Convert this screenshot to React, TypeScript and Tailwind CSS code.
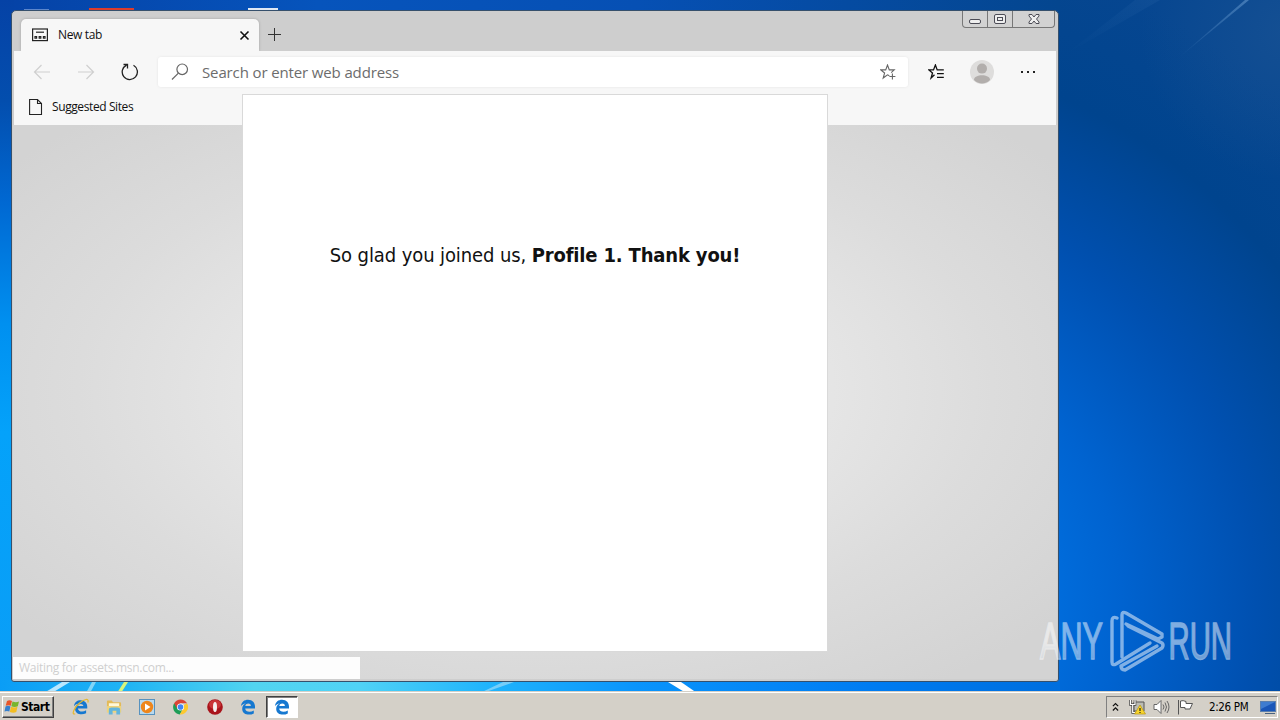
import type { ReactNode } from 'react';
import clsx from 'clsx';

const UI_FONT = "font-['Open_Sans','Noto_Sans',sans-serif]";
const TAHOMA = "font-['DejaVu_Sans_Condensed','DejaVu_Sans',sans-serif]";

export default function App() {
  return (
    <div className="relative flex h-[720px] w-[1280px] flex-col overflow-hidden bg-[#0060c8]">
      <Wallpaper />
      <BrowserWindow />
      <Watermark />
      <Taskbar />
    </div>
  );
}

function Wallpaper() {
  return (
    <svg className="absolute inset-0" width="1280" height="720" viewBox="0 0 1280 720">
      <defs>
        <radialGradient id="sky" gradientUnits="userSpaceOnUse" cx="840" cy="600" r="670">
          <stop offset="0.3" stopColor="#006ede" />
          <stop offset="0.42" stopColor="#0063d0" />
          <stop offset="0.62" stopColor="#0050b0" />
          <stop offset="0.82" stopColor="#00448e" />
          <stop offset="1" stopColor="#064690" />
        </radialGradient>
        <linearGradient id="left" x1="0" y1="0" x2="0" y2="1">
          <stop offset="0" stopColor="#0542a6" />
          <stop offset="0.14" stopColor="#034eae" />
          <stop offset="0.28" stopColor="#0068d2" />
          <stop offset="0.45" stopColor="#0090f0" />
          <stop offset="0.6" stopColor="#04a2fa" />
          <stop offset="1" stopColor="#0b9df6" />
        </linearGradient>
        <linearGradient id="floor" x1="0" y1="0" x2="1" y2="0">
          <stop offset="0" stopColor="#0a9df6" />
          <stop offset="0.12" stopColor="#20b4f4" />
          <stop offset="0.24" stopColor="#52d4f0" />
          <stop offset="0.34" stopColor="#50d2f6" />
          <stop offset="0.46" stopColor="#20b4fc" />
          <stop offset="0.6" stopColor="#0a94fc" />
          <stop offset="0.82" stopColor="#007cf2" />
          <stop offset="1" stopColor="#006ede" />
        </linearGradient>
        <linearGradient id="top" x1="0" y1="0" x2="1" y2="0">
          <stop offset="0" stopColor="#0542a6" />
          <stop offset="0.3" stopColor="#0654bc" />
          <stop offset="0.6" stopColor="#0650b4" />
          <stop offset="1" stopColor="#04468f" />
        </linearGradient>
        <radialGradient id="haze" gradientUnits="userSpaceOnUse" cx="1290" cy="30" r="150">
          <stop offset="0" stopColor="#39679a" stopOpacity="0.28" />
          <stop offset="1" stopColor="#39679a" stopOpacity="0" />
        </radialGradient>
        <linearGradient id="ray" x1="1" y1="0" x2="0" y2="1">
          <stop offset="0" stopColor="#7fb0e0" stopOpacity="0.45" />
          <stop offset="1" stopColor="#7fb0e0" stopOpacity="0" />
        </linearGradient>
      </defs>
      <rect width="1280" height="720" fill="url(#sky)" />
      <rect x="1100" width="180" height="200" fill="url(#haze)" />
      <rect width="1060" height="14" fill="url(#top)" />
      <rect width="14" height="720" fill="url(#left)" />
      <rect x="0" y="680" width="1060" height="14" fill="url(#floor)" />
      <path d="M1249 0 L1176 60 L1245 0Z" fill="url(#ray)" />
      <path d="M1160 0 L1066 54 L1135 0Z" fill="url(#ray)" opacity="0.15" />
      <path d="M44 693 L62 682 H70 L52 693Z" fill="#d6f2ff" opacity="0.85" />
      <path d="M86 693 L92 682 H96 L90 693Z" fill="#9cdff8" opacity="0.8" />
      <path d="M117 693 L124 682 H128 L121 693Z" fill="#d8f47c" />
      <path d="M480 693 L503 682 H514 L483 693Z" fill="#8cd4f8" opacity="0.8" />
      <path d="M668 682 H681 L697 693 H686Z" fill="#fff" />
      {/* desktop shortcuts that peek out above the window */}
      <rect x="24" y="9" width="25" height="3" fill="#5c86cc" />
      <rect x="89" y="8" width="45" height="4" fill="#dc3c2c" />
      <rect x="248" y="8" width="30" height="4" fill="#dfe8f4" />
    </svg>
  );
}

function BrowserWindow() {
  return (
    <div className="absolute left-[11px] top-[10px] flex h-[672px] w-[1048px] flex-col rounded-[5px] rounded-b-[3px] border border-[#36506c] bg-[#cecece] px-px pb-[2px]">
      <TitleBar />
      <div className="mx-px flex h-[74px] shrink-0 flex-col bg-[#f7f7f7]">
        <AddressRow />
        <div className="flex h-[28px] items-center pl-[15px]">
          <svg width="14" height="18" viewBox="0 0 14 18" fill="none" stroke="#222" strokeWidth="1.1">
            <path d="M.6 1.5H8.5L12.5 5.5V16.5H.6ZM8.5 1.5V5.5H12.5" />
          </svg>
          <span className={clsx('ml-[9px] text-[12px] leading-4 tracking-[-0.4px] text-[#111]', UI_FONT)}>
            Suggested Sites
          </span>
        </div>
      </div>
      <div className="relative flex-1 bg-[radial-gradient(ellipse_at_50%_48%,#ededed_0%,#e6e6e6_38%,#dcdcdc_62%,#d3d3d3_90%)]">
        <StatusBubble />
      </div>
      <WelcomeDialog />
    </div>
  );
}

function TitleBar() {
  return (
    <div className="flex h-[40px] shrink-0 items-start justify-between">
      <div className="flex items-center">
        <div className="ml-2 mt-2 flex h-[32px] w-[238px] items-center rounded-t-[5px] bg-[#f7f7f7] pl-[11px] pr-[9px] shadow-[0_0_3px_rgba(0,0,0,0.22)]">
          <svg width="16" height="14" viewBox="0 0 16 14" fill="none" stroke="#222" strokeWidth="1.2">
            <rect x=".6" y="1" width="14.8" height="11.6" />
            <path d="M4 4.2H12" />
            <path d="M3 8.5h1.6v1.6H3ZM7.2 8.5h1.6v1.6H7.2ZM11.4 8.5h1.6v1.6h-1.6Z" />
          </svg>
          <span className={clsx('ml-[10px] flex-1 text-[12px] leading-4 tracking-[-0.35px] text-[#111]', UI_FONT)}>
            New tab
          </span>
          <svg width="11" height="11" viewBox="0 0 11 11" stroke="#111" strokeWidth="1.6">
            <path d="M1.5 1.5L9.5 9.5M9.5 1.5L1.5 9.5" />
          </svg>
        </div>
        <svg className="ml-[9px] mt-[7px]" width="14" height="14" viewBox="0 0 14 14" stroke="#333" strokeWidth="1">
          <path d="M6.5 0V13M0 6.5H13" />
        </svg>
      </div>
      <div className="mr-[2px] flex h-[17px] rounded-b-[4px] border border-t-0 border-[#777] bg-[#d2d2d2]">
        <CaptionButton className="w-[25px] border-r">
          <rect x="6.5" y="8.5" width="11" height="4" rx="1.5" />
        </CaptionButton>
        <CaptionButton className="w-[25px] border-r">
          <rect x="6.5" y="3.5" width="11" height="9" rx="1.5" />
          <rect x="9.5" y="6.5" width="5" height="3" />
        </CaptionButton>
        <CaptionButton className="w-[41px]">
          <path d="M7 3.5H10L12 6L14 3.5H17V5L14.5 8L17 11V12.5H14L12 10L10 12.5H7V11L9.5 8L7 5Z" />
        </CaptionButton>
      </div>
    </div>
  );
}

function CaptionButton({ className, children }: { className: string; children: ReactNode }) {
  return (
    <div className={clsx('flex justify-center border-[#777]', className)}>
      <svg className="shrink-0" width="24" height="16" viewBox="0 0 24 16" fill="#eee" stroke="#4c4c56" strokeWidth="1">
        {children}
      </svg>
    </div>
  );
}

function AddressRow() {
  return (
    <div className="flex h-[42px] items-center pl-[19px] pr-[19px]">
      <svg width="18" height="16" viewBox="0 0 18 16" fill="none" stroke="#cfcfcf" strokeWidth="1.2">
        <path d="M17 8H1.5M8.5 1L1.5 8L8.5 15" />
      </svg>
      <svg className="ml-[26px]" width="18" height="16" viewBox="0 0 18 16" fill="none" stroke="#cfcfcf" strokeWidth="1.2">
        <path d="M1 8H16.5M9.5 1L16.5 8L9.5 15" />
      </svg>
      <svg className="ml-[26px]" width="18" height="18" viewBox="0 0 18 18" fill="none" stroke="#222" strokeWidth="1.3">
        <path d="M12.5 2.3A7.6 7.6 0 1 1 5.5 2.1M2.5 1.5H6.5V5.5" />
      </svg>
      <div className="ml-[19px] flex h-[30px] w-[750px] items-center rounded-[3px] bg-white pl-[13px] pr-[12px] shadow-[0_0_3px_rgba(0,0,0,0.08)]">
        <svg width="18" height="18" viewBox="0 0 18 18" fill="none" stroke="#666" strokeWidth="1.2">
          <circle cx="11.2" cy="6.3" r="5.3" />
          <path d="M7.4 10.1L1 16.5" />
        </svg>
        <span className={clsx('ml-[13px] flex-1 text-[15px] leading-5 tracking-[-0.13px] text-[#6c6c6c]', UI_FONT)}>
          Search or enter web address
        </span>
        <svg width="16" height="16" viewBox="0 0 16 16" fill="none" stroke="#666" strokeWidth="1.1">
          <path d="M9.3 11.8L7.5 10.8L3.2 14L4.6 9L.8 5.9H5.7L7.5 1L9.3 5.9H14.2L11.2 8.6M12.4 9.5V15.5M9.4 12.5H15.4" />
        </svg>
      </div>
      <svg className="ml-[20px]" width="17" height="16" viewBox="0 0 17 16" fill="none" stroke="#111" strokeWidth="1.3">
        <path d="M6.5 10.8L3.1 14L4.5 9L.9 5.9H5.5L7.4 1L9.2 5.9H15.8M9 9.6H15.8M9 13.3H15.8" />
      </svg>
      <svg className="ml-[25px]" width="24" height="24" viewBox="0 0 24 24">
        <circle cx="12" cy="12" r="12" fill="#dedddc" />
        <circle cx="12" cy="8.6" r="5" fill="#b2aeac" />
        <path d="M4 20C4 13.8 20 13.8 20 20C16 24.5 8 24.5 4 20Z" fill="#b2aeac" />
      </svg>
      <svg className="ml-[26px]" width="16" height="4" viewBox="0 0 16 4" fill="#222">
        <path d="M1 1h2v2H1ZM7 1h2v2H7ZM13 1h2v2H13Z" />
      </svg>
    </div>
  );
}

function StatusBubble() {
  return (
    <div
      className={clsx(
        'absolute bottom-0 left-0 h-[22px] w-[347px] bg-[#fdfdfd] pl-[6px] text-[12px] leading-[22px] tracking-[-0.28px] text-[#cfcfcf]',
        UI_FONT,
      )}
    >
      Waiting for assets.msn.com...
    </div>
  );
}

function WelcomeDialog() {
  return (
    <div className="absolute left-[230px] top-[83px] flex h-[558px] w-[586px] justify-center border border-[#d9d9d9] bg-white pt-[146px]">
      <p className={clsx('h-7 whitespace-nowrap text-[20px] leading-7 text-[#111]', TAHOMA)}>
        <span className="tracking-[-0.1px]">So glad you joined us, </span>
        <b className="tracking-[-0.17px]">Profile 1. Thank you!</b>
      </p>
    </div>
  );
}

function Watermark() {
  return (
    <svg className="absolute left-[1030px] top-[600px]" width="240" height="80" viewBox="0 0 240 80" opacity="0.5">
      <defs>
        <linearGradient id="lettering" x1="0" y1="0" x2="0" y2="1">
          <stop offset="0.5" stopColor="#fff" />
          <stop offset="0.8" stopColor="#dbe4ee" />
        </linearGradient>
      </defs>
      <g
        fill="url(#lettering)"
        stroke="#fff"
        strokeWidth="1.3"
        fontFamily="Liberation Sans, sans-serif"
        fontSize="51"
      >
        <text transform="translate(10 59) scale(0.6 1)">ANY</text>
        <text transform="translate(138.5 59) scale(0.575 1)">RUN</text>
      </g>
      <g fill="none" stroke="#fff" strokeWidth="3.4" strokeLinejoin="round" strokeLinecap="round">
        <path d="M87 18Q82 16 82 21V62Q82 66 86 64L120 43" />
        <path d="M92 57V15Q92 11 96 13L132 34V37L128 39L96 24" />
        <path d="M98 26L132 43Q134 45 132 48L95 70Q91 70 91 66L127 46" />
      </g>
    </svg>
  );
}

function Taskbar() {
  return (
    <div className="relative mt-auto flex h-7 items-center justify-between border-t border-white bg-[#d4d0c8] pl-[2px] pr-[2px] shadow-[0_-1px_0_#d4d0c8]">
      <div className="flex items-center">
        <div className="flex h-[22px] w-[52px] items-center border border-[#404040] border-l-white border-t-white pl-px shadow-[inset_-1px_-1px_0_#808080]">
          <WindowsFlag />
          <span className={clsx('ml-px text-[12px] font-bold leading-4 tracking-[-0.45px] text-black', TAHOMA)}>
            Start
          </span>
        </div>
        <div className="ml-[18px] flex items-center gap-[17px]">
          <svg width="17" height="18" viewBox="0 0 17 18">
            <g transform="translate(1 1.5) scale(0.95)">
              <EdgeShape />
            </g>
            <path
              d="M3.2 15.8C-1 17.3 2 10 7 5.5S17.5-.3 15.8 4.5"
              fill="none"
              stroke="#e5b82c"
              strokeWidth="1.2"
            />
          </svg>
          <svg width="16" height="18" viewBox="0 0 17 18">
            <path d="M1 3Q1 2 2 2H6L7.5 4H15Q16 4 16 5V14H1Z" fill="#e3ba58" />
            <path d="M3 5H14V8H3Z" fill="#fff8d8" />
            <path d="M1 8H16V15H1Z" fill="#eed47c" />
            <path d="M3 17V12Q3 9.5 6 9.5H12Q15 9.5 15 12V17H11V13H7V17Z" fill="#62b4dc" />
          </svg>
          <svg width="16" height="16" viewBox="0 0 16 16">
            <rect x=".5" y=".5" width="15" height="15" fill="#b8d9ef" stroke="#5792bf" />
            <circle cx="8" cy="8" r="6.2" fill="#ee861c" />
            <path d="M6 4.5L11.5 8L6 11.5Z" fill="#fff" />
          </svg>
          <svg className="ml-px" width="15" height="16" viewBox="0 0 16 16">
            <path d="M8 8L1.2 4A8 8 0 0 0 7.2 16L11.3 9Z" fill="#1d9d57" />
            <path d="M8 8L14.9 4A8 8 0 0 1 7.2 16L11 9.5Z" fill="#fdc92f" />
            <path d="M8 4H15A8 8 0 0 0 1.2 4L4.5 9.8Z" fill="#db4437" />
            <circle cx="8" cy="8" r="3.8" fill="#fff" />
            <circle cx="8" cy="8" r="3" fill="#4285f4" />
          </svg>
          <svg className="ml-[2px]" width="16" height="16" viewBox="0 0 16 16">
            <circle cx="8" cy="8" r="7.8" fill="#a9141b" />
            <ellipse cx="8" cy="5.5" rx="6" ry="4.5" fill="#c93638" />
            <ellipse cx="8" cy="8" rx="2" ry="5" fill="#f5f0ee" />
          </svg>
          <EdgeLogo />
        </div>
        <div className="ml-[10px] flex h-[22px] w-[32px] items-center justify-center border border-white border-l-[#404040] border-t-[#404040] bg-white shadow-[inset_1px_1px_0_#808080]">
          <EdgeLogo />
        </div>
      </div>
      <div className="flex h-[22px] w-[172px] items-center border border-white border-l-[#808080] border-t-[#808080] pl-[5px]">
        <svg width="7" height="12" viewBox="0 0 8 12" fill="none" stroke="#111" strokeWidth="1.4">
          <path d="M1 5L4 2L7 5M1 10L4 7L7 10" />
        </svg>
        <svg className="ml-[10px]" width="17" height="17" viewBox="0 0 17 17">
          <path d="M5 4H15V13H5Z" fill="#bcbcb4" stroke="#555" />
          <path d="M1.5 2V6.5H6V2M3.7 6.5V14.5H6" fill="none" stroke="#444" strokeWidth="2.6" />
          <path d="M1.5 2V6.5H6V2M3.7 6.5V14.5H6" fill="none" stroke="#fff" strokeWidth="1.2" />
          <path d="M11 7L16.5 16H5.5Z" fill="#f8d42c" stroke="#b89510" strokeWidth=".7" />
          <path d="M11 10V13M11 14V15" stroke="#222" strokeWidth="1.2" />
        </svg>
        <svg className="ml-[7px]" width="17" height="16" viewBox="0 0 17 16" fill="none" stroke="#666">
          <path d="M1 5.5H4L8 1.5V14.5L4 10.5H1Z" fill="#fff" />
          <path d="M10 5.5Q12 8 10 10.5M12 3.5Q15 8 12 12.5M14 2Q18 8 14 14" />
        </svg>
        <svg className="ml-[7px]" width="17" height="16" viewBox="0 0 17 16" fill="#fff" stroke="#555">
          <path d="M1.5 1V15.5M3.5 2Q6 1 9 2.5V4.5H15.5L13 10H8V8.5H3.5Z" />
        </svg>
        <span className={clsx('ml-[15px] whitespace-nowrap text-[11.5px] leading-4 tracking-[-0.35px] text-black', TAHOMA)}>
          2:26 PM
        </span>
        <svg className="ml-auto mr-px mt-[2px]" width="16" height="14" viewBox="0 0 16 14">
          <rect x=".5" y=".5" width="15" height="10" fill="#1a56b8" stroke="#5b7fae" />
          <path d="M1 1H15L1 8Z" fill="#3f7cd0" />
          <path d="M5 12.5H15" stroke="#49627f" />
        </svg>
      </div>
    </div>
  );
}

function WindowsFlag() {
  return (
    <svg width="16" height="15" viewBox="0 0 15 15">
      <path d="M2.5 2Q5 .5 7.5 2L6.3 6.8Q4 5.5 1.2 6.8Z" fill="#e8562a" />
      <path d="M8 2.4Q11.5 4 14.5 2.4L13.3 7.2Q10 8.8 6.8 7.2Z" fill="#78b52c" />
      <path d="M1 7.4Q3.5 6.1 6 7.4L4.8 12.6Q2.5 11.3 0 12.6Z" fill="#3680ce" />
      <path d="M6.5 7.8Q10 9.4 13 7.8L11.8 13Q9 14.5 5.3 13Z" fill="#f3bd21" />
    </svg>
  );
}

function EdgeShape() {
  return (
    <path
      d="M1 7.2C1.6 2.8 4.4.8 8 .8C12.6.8 15 4 15 7.6V9.4H5.2C5.4 13 10.4 13.6 13.8 11.4V14.4C9 17 2.2 15.4 2.2 9.9C2.2 7.2 3.6 5.4 5.8 4.5C3.6 4.7 1.8 5.8 1 7.2ZM5.3 6.9H10.9C10.8 3.9 5.9 3.8 5.3 6.9Z"
      fill="#1678d0"
    />
  );
}

function EdgeLogo() {
  return (
    <svg width="16" height="16" viewBox="0 0 16 16">
      <EdgeShape />
    </svg>
  );
}
